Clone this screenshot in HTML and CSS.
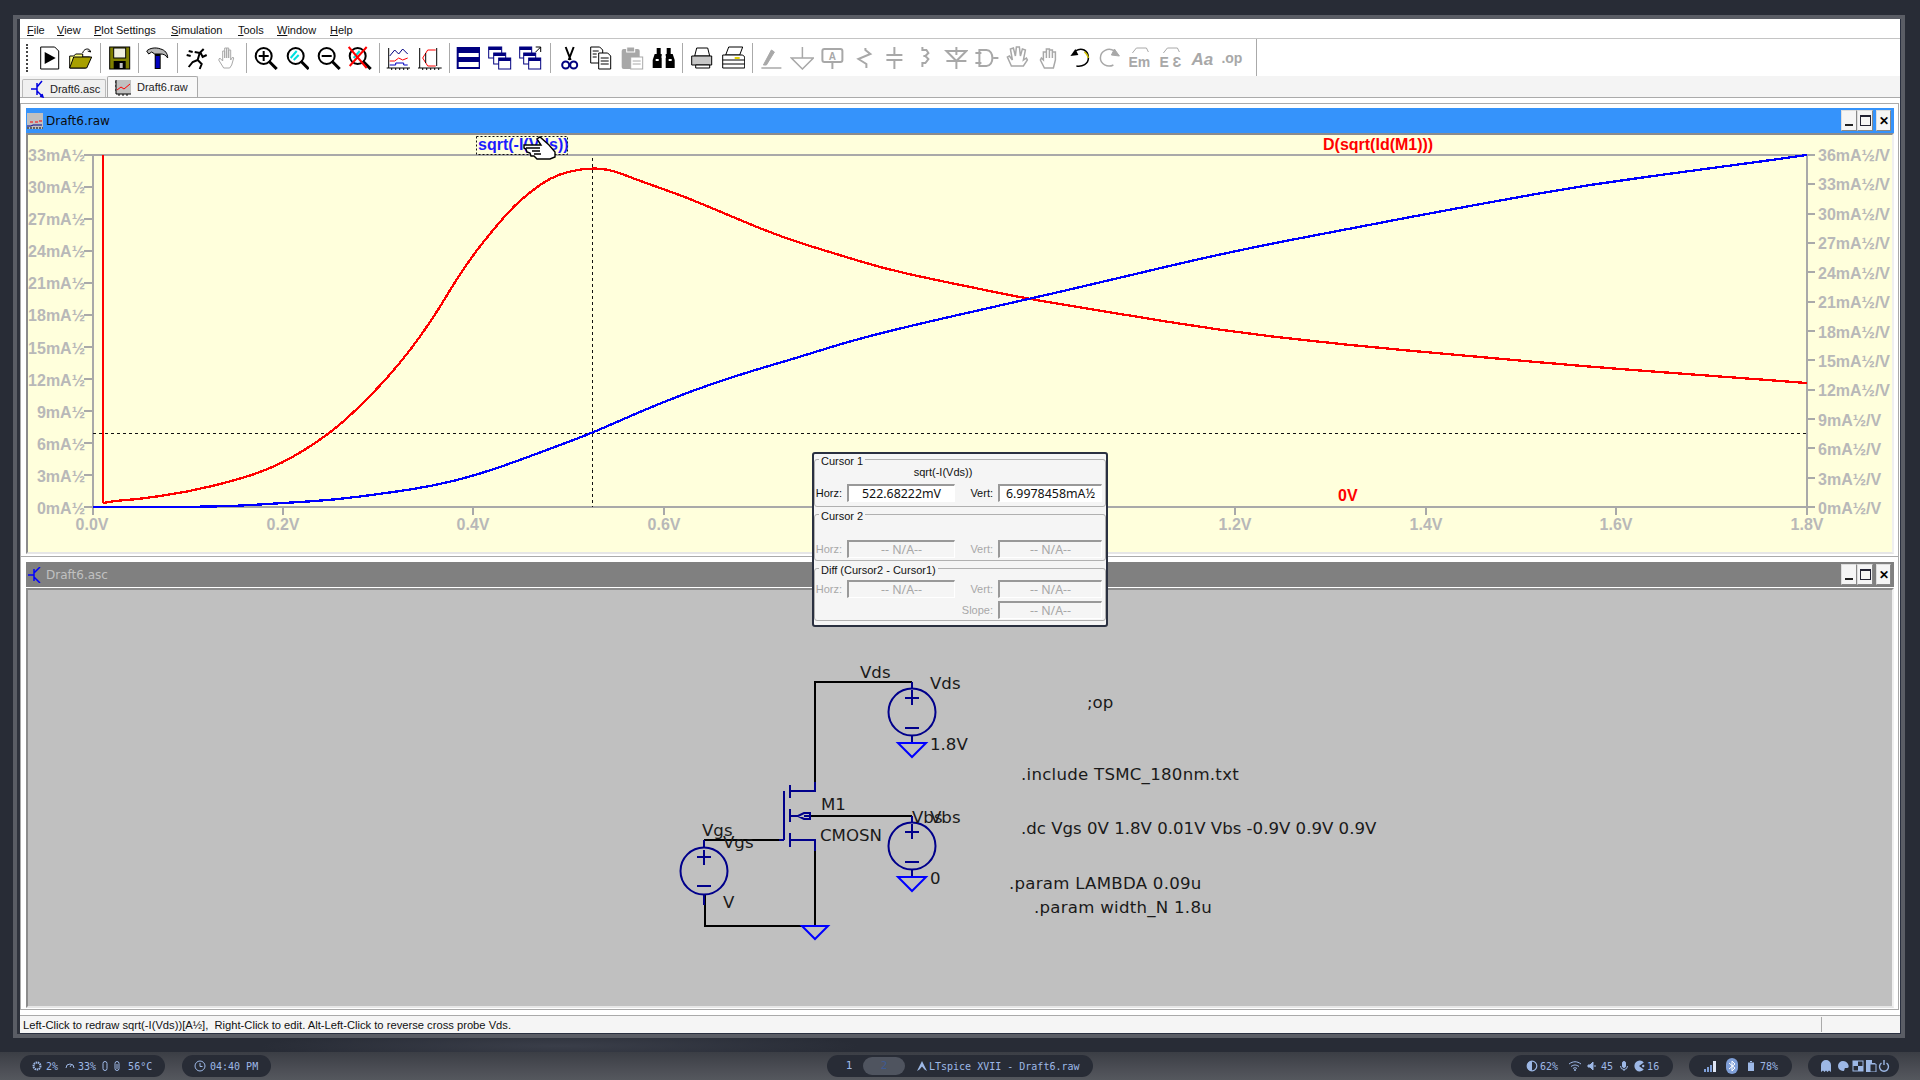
FILE: index.html
```html
<!DOCTYPE html>
<html lang="en">
  <head>
    <meta charset="UTF-8" />
    <title>LTspice XVII - Draft6.raw</title>
    <link rel="stylesheet" href="styles.css">
  </head>
  <body>
    <div class="app">
      <div class="menubar">
        <span><u>F</u>ile</span>
        <span><u>V</u>iew</span>
        <span><u>P</u>lot Settings</span>
        <span><u>S</u>imulation</span>
        <span><u>T</u>ools</span>
        <span><u>W</u>indow</span>
        <span><u>H</u>elp</span>
      </div>

      <div class="toolbar">
        <div class="grip"></div>
        <svg class="tool" viewBox="0 0 24 24"><path d="M3 1h14l4 4v18H3z" fill="#fff" stroke="#000"/><path d="M7 6l11 6-11 6z"/></svg>
        <svg class="tool" viewBox="0 0 24 24"><path d="M1 10h4l2-2h7v3h7l-4 11H1z" fill="#ffff80" stroke="#000"/><path d="M1 22l4-11h18l-5 11z" fill="#a8a000" stroke="#000"/><path d="M14 7c1-4 5-5 7-3l1 2-3-1" fill="none" stroke="#000"/></svg>
        <div class="sep"></div>
        <svg class="tool" viewBox="0 0 24 24"><rect x="2" y="1" width="20" height="22" fill="#808000" stroke="#000"/><rect x="6" y="2" width="12" height="10" fill="#f0f0e0" stroke="#000"/><rect x="6" y="15" width="12" height="8" fill="#000"/><rect x="12" y="17" width="3" height="5" fill="#c0c0c0"/></svg>
        <div class="sep"></div>
        <svg class="tool" viewBox="0 0 24 24"><path d="M1 5c3-3 9-4 14-2 4 1 7 4 7 9-2-3-4-4-7-4H9L6 6 3 8z" fill="#b8b8b8" stroke="#000"/><path d="M9 8h6v15H9z" fill="#000"/><rect x="10" y="10" width="4" height="12" fill="#0000c0"/></svg>
        <div class="sep"></div>
        <svg class="tool" viewBox="0 0 24 24"><path d="M19 3l-4 4-5-1M15 7l-2 7 4 4-2 5M13 14l-5 2-4 5M16 7l2 4 4-2M4 5l4 1M2 9l4 1" fill="none" stroke="#000" stroke-width="2"/></svg>
        <svg class="tool" viewBox="0 0 24 24"><path d="M8 22l-5-8 1-2 3 3V5h2v7V2h2v10V2h2v10V4h2v10l2-3 1 1-2 7-2 3z" fill="#fff" stroke="#a8a8a8"/></svg>
        <div class="sep"></div>
        <svg class="tool" viewBox="0 0 24 24"><circle cx="10" cy="10" r="8" fill="#fff" stroke="#000" stroke-width="2"/><path d="M15 15l8 8" stroke="#000" stroke-width="3"/><path d="M5 10h10M10 5v10" stroke="#000" stroke-width="2"/></svg>
        <svg class="tool" viewBox="0 0 24 24"><circle cx="10" cy="10" r="8" fill="#fff" stroke="#000" stroke-width="2"/><path d="M15 15l8 8" stroke="#000" stroke-width="3"/><path d="M5 12l6-7M8 14l5-5" stroke="#00e0e0" stroke-width="2"/></svg>
        <svg class="tool" viewBox="0 0 24 24"><circle cx="10" cy="10" r="8" fill="#fff" stroke="#000" stroke-width="2"/><path d="M15 15l8 8" stroke="#000" stroke-width="3"/><path d="M5 10h10" stroke="#000" stroke-width="2"/></svg>
        <svg class="tool" viewBox="0 0 24 24"><circle cx="10" cy="10" r="8" fill="#fff" stroke="#000" stroke-width="2"/><path d="M15 15l8 8" stroke="#000" stroke-width="3"/><path d="M6 12l6-7" stroke="#00e0e0" stroke-width="2"/><path d="M1 1l18 21M19 1L2 20" stroke="#f00" stroke-width="2"/></svg>
        <div class="sep"></div>
        <svg class="tool" viewBox="0 0 24 24"><path d="M2 2v20h22M0 22h2M5 22v2M9 22v2M13 22v2M17 22v2M21 22v2" fill="none" stroke="#000"/><path d="M3 10l5-6 4 4 4-5 5 5" fill="none" stroke="#000080"/><path d="M3 15h5l4-3 4 2 5-2" fill="none" stroke="#f00"/><path d="M3 19h6v-2h8v2h4" fill="none" stroke="#0000c0"/></svg>
        <svg class="tool" viewBox="0 0 24 24"><path d="M2 2v20h22M0 22h2M5 22v2M9 22v2M13 22v2M17 22v2M21 22v2" fill="none" stroke="#000"/><path d="M5 12l5-8h8M5 12l5 8h8" fill="none" stroke="#f00"/><path d="M8 7v10M19 2v18" fill="none" stroke="#000"/></svg>
        <div class="sep"></div>
        <svg class="tool" viewBox="0 0 24 24"><rect x="1" y="2" width="22" height="20" fill="#fff" stroke="#000080" stroke-width="2"/><rect x="1" y="2" width="22" height="5" fill="#000080"/><rect x="1" y="11" width="22" height="5" fill="#000080"/></svg>
        <svg class="tool" viewBox="0 0 24 24"><rect x="1" y="1" width="13" height="11" fill="#fff" stroke="#000080"/><rect x="1" y="1" width="13" height="3" fill="#000080"/><rect x="6" y="7" width="12" height="11" fill="#fff" stroke="#000080"/><rect x="6" y="7" width="12" height="3" fill="#000080"/><rect x="11" y="12" width="12" height="11" fill="#fff" stroke="#000080"/><rect x="11" y="12" width="12" height="3" fill="#000080"/></svg>
        <svg class="tool" viewBox="0 0 24 24"><rect x="1" y="1" width="12" height="11" fill="#fff" stroke="#000080"/><rect x="1" y="1" width="12" height="3" fill="#000080"/><rect x="5" y="7" width="12" height="11" fill="#fff" stroke="#000080"/><rect x="5" y="7" width="12" height="3" fill="#000080"/><rect x="10" y="12" width="12" height="11" fill="#fff" stroke="#000080"/><rect x="10" y="12" width="12" height="3" fill="#000080"/><path d="M17 1h5v5M22 1l-5 5" fill="none" stroke="#000"/></svg>
        <div class="sep"></div>
        <svg class="tool" viewBox="0 0 24 24"><path d="M8 1l5 13M16 1l-5 13" stroke="#000" stroke-width="2"/><circle cx="8" cy="19" r="3.5" fill="#fff" stroke="#000080" stroke-width="2"/><circle cx="16" cy="19" r="3.5" fill="#fff" stroke="#000080" stroke-width="2"/></svg>
        <svg class="tool" viewBox="0 0 24 24"><path d="M2 1h9l3 3v13H2z" fill="#fff" stroke="#000"/><path d="M10 7h9l3 3v13H10z" fill="#fff" stroke="#000"/><path d="M4 5h6M4 8h4M4 11h4M12 12h8M12 15h8M12 18h8" stroke="#000"/></svg>
        <svg class="tool" viewBox="0 0 24 24"><rect x="2" y="3" width="18" height="20" rx="2" fill="#a8a8a8"/><rect x="7" y="1" width="8" height="5" fill="#a8a8a8" stroke="#fff"/><rect x="11" y="11" width="12" height="12" fill="#fff" stroke="#a8a8a8"/><path d="M13 15h8M13 18h8" stroke="#a8a8a8"/></svg>
        <svg class="tool" viewBox="0 0 24 24"><path d="M3 8h7v14H1V14zM14 8h7l2 6v8h-9z"/><rect x="5" y="2" width="4" height="6"/><rect x="15" y="2" width="4" height="6"/><path d="M4 14h3M17 14h3M10 11h4" stroke="#fff" stroke-width="2"/></svg>
        <div class="sep"></div>
        <svg class="tool" viewBox="0 0 24 24"><path d="M7 2h11l2 8H5z" fill="#fff" stroke="#000"/><path d="M2 10h20v9H2z" fill="#c8c8c8" stroke="#000"/><path d="M6 19h14v3H6z" fill="#fff" stroke="#000"/></svg>
        <svg class="tool" viewBox="0 0 24 24"><path d="M7 1h14l-3 8H4z" fill="#fff" stroke="#000"/><path d="M1 9h20l2 2v11H1z" fill="#fff" stroke="#000"/><path d="M1 14h22M1 18h22" stroke="#000"/><rect x="13" y="11" width="5" height="2" fill="#e0d000"/></svg>
        <div class="sep edit"></div>
        <svg class="tool off" viewBox="0 0 24 24"><path d="M2 22h20" class="thin"/><path d="M4 19l8-15 3 2-8 13z" fill="#a8a8a8"/></svg>
        <svg class="tool off" viewBox="0 0 24 24"><path d="M12 1v11M1 12h22L12 23z" fill="none" stroke-width="1.500"/></svg>
        <svg class="tool off" viewBox="0 0 24 24"><rect x="2" y="3" width="20" height="13" rx="2" fill="none" stroke-width="2"/><text x="12" y="14" class="icon-text">A</text><path d="M12 16v7" fill="none" stroke-width="2"/></svg>
        <svg class="tool off" viewBox="0 0 24 24"><path d="M14 2v2l5 4-12 5 8 5v4" fill="none" stroke-width="2"/></svg>
        <svg class="tool off" viewBox="0 0 24 24"><path d="M12 1v8M4 9h16M4 14h16M12 14v9" fill="none" stroke-width="2"/></svg>
        <svg class="tool off" viewBox="0 0 24 24"><path d="M9 1v3h4l2 3-3 3h-2 2l3 3-3 4H9v4" fill="none" stroke-width="2"/></svg>
        <svg class="tool off" viewBox="0 0 24 24"><path d="M12 1v8M2 5h20L12 15zM2 15h20M12 15v8" fill="none" stroke-width="2"/></svg>
        <svg class="tool off" viewBox="0 0 24 24"><path d="M1 7h6M1 17h6M5 4h7c8 0 8 16 0 16H5zM19 12h5" fill="none" stroke-width="2"/></svg>
        <svg class="tool off" viewBox="0 0 24 24"><path d="M6 20L2 11l2-1 3 4-2-11 3-1 2 8 1-9h3l1 9 2-7 3 1-2 10 3-2 1 2-4 6z" fill="#fff" stroke-width="1.5"/></svg>
        <svg class="tool off" viewBox="0 0 24 24"><path d="M8 22l-4-8 1-2 2 2V6h3v6V3h3v9V4h3v8V6h3v8l-2 8z" fill="#fff" stroke-width="1.5"/></svg>
        <svg class="tool" viewBox="0 0 24 24"><path d="M8 5c6-4 13-1 13 7 0 6-6 9-12 8" fill="none" stroke="#000" stroke-width="1.5"/><path d="M17 6c2 1 3 3 4 6" fill="none" stroke="#d0c000" stroke-width="1.5"/><path d="M3 10l8-1-3-6z"/></svg>
        <svg class="tool off" viewBox="0 0 24 24"><path d="M17 5C11 1 3 5 3 12c0 6 7 10 13 7" fill="none" stroke-width="1.5"/><path d="M22 10l-8-1 3-6z" fill="#a8a8a8"/></svg>
        <svg class="tool off" viewBox="0 0 24 24"><path d="M4 7l4-5h10l2 4" fill="none"/><text x="0" y="21" class="icon-text big">Em</text></svg>
        <svg class="tool off" viewBox="0 0 24 24"><path d="M4 7l4-5h10l2 4" fill="none"/><text x="0" y="21" class="icon-text big">E &#400;</text></svg>
        <svg class="tool off" viewBox="0 0 24 24"><text x="1" y="19" class="icon-text aa">Aa</text></svg>
        <svg class="tool off" viewBox="0 0 24 24"><text x="0" y="17" class="icon-text big">.op</text></svg>
        <div class="sep end"></div>
      </div>

      <div class="tabs">
        <div class="tab">
          <svg width="14" height="18" viewBox="0 0 14 18"><path d="M1 9h6M7 3v12M12 1L7 7M7 11l6 6M10 16l3 1-1-3" fill="none" stroke="#0000e0" stroke-width="1.5"/></svg>
          Draft6.asc
        </div>
        <div class="tab active">
          <svg width="16" height="17" viewBox="0 0 16 17"><rect x="1" y="1" width="15" height="14" fill="#c0c0c0"/><path d="M1 1v14h15M1 3H0M1 7H0M1 11H0M4 15v2M8 15v2M12 15v2" fill="none" stroke="#000"/><path d="M2 11l4-3 3 2 6-5" fill="none" stroke="#f00"/></svg>
          Draft6.raw
        </div>
      </div>

      <div class="mdi">
        <div class="child plot-window">
          <div class="titlebar active">
            <svg class="title-icon" width="16" height="16" viewBox="0 0 16 16"><rect width="16" height="16" fill="#c0c0c0"/><path d="M3 9h3M8 9h3M12 8h3" stroke="#f00"/><path d="M0 13h4l2-1h9" fill="none" stroke="#00008b"/><path d="M0 15h16" stroke="#000" stroke-dasharray="2 1"/></svg>
            <span class="title-text">Draft6.raw</span>
            <div class="controls">
              <button class="ctl"><span class="min"></span></button>
              <button class="ctl"><span class="max"></span></button>
              <button class="ctl close">&#10005;</button>
            </div>
          </div>
          <div class="canvas plot-canvas">
            <svg class="plot" width="1864" height="417" viewBox="28 135 1864 417">
              <path class="axis" d="M84 155H1815M84 507H1815M93 155V515M1807 155V507"/>
              <path class="axis" d="M84 187h9M84 219h9M84 251h9M84 283h9M84 315h9M84 347h9M84 379h9M84 411h9M84 443h9M84 475h9"/>
              <path class="axis" d="M1807 184h8M1807 214h8M1807 243h8M1807 272h8M1807 302h8M1807 331h8M1807 360h8M1807 390h8M1807 419h8M1807 448h8M1807 478h8"/>
              <path class="axis" d="M283 507v8M473 507v8M664 507v8M854 507v8M1045 507v8M1235 507v8M1426 507v8M1616 507v8M1807 507v8"/>

              <g class="ylabels">
                <text x="85" y="161">33mA½</text>
                <text x="85" y="193">30mA½</text>
                <text x="85" y="225">27mA½</text>
                <text x="85" y="257">24mA½</text>
                <text x="85" y="289">21mA½</text>
                <text x="85" y="321">18mA½</text>
                <text x="85" y="354">15mA½</text>
                <text x="85" y="386">12mA½</text>
                <text x="85" y="418">9mA½</text>
                <text x="85" y="450">6mA½</text>
                <text x="85" y="482">3mA½</text>
                <text x="85" y="514">0mA½</text>
              </g>
              <g class="rlabels">
                <text x="1818" y="161">36mA½/V</text>
                <text x="1818" y="190">33mA½/V</text>
                <text x="1818" y="220">30mA½/V</text>
                <text x="1818" y="249">27mA½/V</text>
                <text x="1818" y="279">24mA½/V</text>
                <text x="1818" y="308">21mA½/V</text>
                <text x="1818" y="338">18mA½/V</text>
                <text x="1818" y="367">15mA½/V</text>
                <text x="1818" y="396">12mA½/V</text>
                <text x="1818" y="426">9mA½/V</text>
                <text x="1818" y="455">6mA½/V</text>
                <text x="1818" y="485">3mA½/V</text>
                <text x="1818" y="514">0mA½/V</text>
              </g>
              <g class="xlabels">
                <text x="92" y="530">0.0V</text>
                <text x="283" y="530">0.2V</text>
                <text x="473" y="530">0.4V</text>
                <text x="664" y="530">0.6V</text>
                <text x="1235" y="530">1.2V</text>
                <text x="1426" y="530">1.4V</text>
                <text x="1616" y="530">1.6V</text>
                <text x="1807" y="530">1.8V</text>
              </g>

              <path class="cursor" d="M592 158V507M93 433H1807"/>
              <path class="trace red" d="M103 155V503"/>
              <path class="trace red" data-points="103,503 113,501 140,499 187,492 233,481 267,470 297,455 330,433 353,413 378,388 400,363 420,337 440,307 453,285 473,255 493,230 512,208 530,192 550,178 570,171 592,168 612,170 640,181 686,197 735,218 784,238 833,253 882,268 931,279 980,289 1029,299 1102,311 1224,331 1347,345 1469,356 1592,367 1714,376 1807,383"></path>
              <path class="trace blue" data-points="93,507 187,507 237,506 283,503 333,500 387,493 433,486 477,475 520,460 560,445 592,433 637,413 686,393 735,376 796,358 857,339 931,321 1029,299 1102,282 1224,253 1347,229 1469,206 1592,184 1714,168 1807,155"></path>

              <rect class="selbox" x="476.5" y="136.5" width="91" height="18"/>
              <text class="trace-name blue-name" x="478" y="150">sqrt(-I(Vds))</text>
              <text class="trace-name red-name" x="1323" y="150">D(sqrt(Id(M1)))</text>
              <text class="trace-name red-name" x="1338" y="501">0V</text>

              <path class="hand" d="M524 145h17l-4-6 3-2 9 8 6 7v5l-5 2h-13l-3-3h-3l-1-3-3-1-1-3-2-1z"/>
              <path class="hand-line" d="M526 148h14M532 151h8M534 154h7"/>
            </svg>
          </div>
        </div>

        <div class="child schematic-window">
          <div class="titlebar">
            <svg class="title-icon" width="16" height="16" viewBox="0 0 16 16"><path d="M1 8h6M7 2v12M13 0L7 6M7 10l6 6" fill="none" stroke="#0000ff" stroke-width="1.5"/></svg>
            <span class="title-text">Draft6.asc</span>
            <div class="controls">
              <button class="ctl"><span class="min"></span></button>
              <button class="ctl"><span class="max"></span></button>
              <button class="ctl close">&#10005;</button>
            </div>
          </div>
          <div class="canvas schematic-canvas">
            <svg class="schematic" width="1864" height="416" viewBox="28 590 1864 416">
              <path class="wire" d="M912 682H815V782M815 851V926H705V895M704 840H779M810 816H912"/>
              <path class="part" d="M815 782v9H790M790 785v13M790 809v13M790 833v14M784 791v49M779 840h5M790 840h25v11M790 816h8M810 816h-6"/>
              <path class="part" d="M798 816l6-3h6v6h-6z"/>

              <circle class="part" cx="912" cy="712" r="23.5"/>
              <path class="part" d="M912 682v6M912 736v7M912 690v15M905 698h14M905 728h14"/>
              <circle class="part" cx="912" cy="846" r="23.5"/>
              <path class="part" d="M912 816v6M912 870v7M912 824v15M905 832h14M905 862h14"/>
              <circle class="part" cx="704" cy="871" r="23.5"/>
              <path class="part" d="M704 840v7M704 895v10M704 850v15M697 857h14M697 886h14"/>

              <path class="ground" d="M898 743h28l-14 14z"/>
              <path class="ground" d="M898 877h28l-14 14z"/>
              <path class="ground" d="M802 926h26l-13 13z"/>

              <g class="netlabels">
                <text x="860" y="678">Vds</text>
                <text x="930" y="689">Vds</text>
                <text x="930" y="750">1.8V</text>
                <text x="821" y="810">M1</text>
                <text x="820" y="841">CMOSN</text>
                <text x="912" y="823">Vbs</text>
                <text x="930" y="823">Vbs</text>
                <text x="702" y="836">Vgs</text>
                <text x="723" y="848">Vgs</text>
                <text x="723" y="908">V</text>
                <text x="930" y="884">0</text>
                <text x="1087" y="708">;op</text>
                <text class="wide" x="1021" y="780">.include TSMC_180nm.txt</text>
                <text x="1021" y="834">.dc Vgs 0V 1.8V 0.01V Vbs -0.9V 0.9V 0.9V</text>
                <text class="wide" x="1009" y="889">.param LAMBDA 0.09u</text>
                <text class="wide" x="1034" y="913">.param width_N 1.8u</text>
              </g>
            </svg>
          </div>
        </div>
      </div>

      <div class="statusbar">
        <span class="status-text">Left-Click to redraw sqrt(-I(Vds))[A½],&nbsp; Right-Click to edit. Alt-Left-Click to reverse cross probe Vds.</span>
        <div class="status-end"></div>
      </div>
    </div>

    <div class="cursor-dialog">
      <div class="group first">
        <div class="legend">Cursor 1</div>
        <div class="caption">sqrt(-I(Vds))</div>
        <div class="row">
          <label>Horz:</label><div class="field on">522.68222mV</div>
          <label>Vert:</label><div class="field on">6.9978458mA½</div>
        </div>
      </div>
      <div class="group second">
        <div class="legend">Cursor 2</div>
        <div class="row off">
          <label>Horz:</label><div class="field">-- N/A--</div>
          <label>Vert:</label><div class="field">-- N/A--</div>
        </div>
      </div>
      <div class="group third">
        <div class="legend">Diff (Cursor2 - Cursor1)</div>
        <div class="row off">
          <label>Horz:</label><div class="field">-- N/A--</div>
          <label>Vert:</label><div class="field">-- N/A--</div>
        </div>
        <div class="row off">
          <span></span><span></span>
          <label>Slope:</label><div class="field">-- N/A--</div>
        </div>
      </div>
    </div>

    <div class="panel">
      <div class="pill p1">
        <svg class="ic" viewBox="0 0 10 10"><circle cx="5" cy="5" r="3.5" fill="none" stroke-width="2" stroke-dasharray="1.5 0.6"/></svg><span class="ml4">2%</span>
        <svg class="ic ml7" viewBox="0 0 10 10"><path d="M1 7a4 4 0 1 1 8 0M5 6l2-3" fill="none"/></svg><span class="ml3">33%</span>
        <svg class="ic ml4" viewBox="0 0 10 10"><rect x="3" y="0.5" width="4" height="9" rx="2" fill="none"/></svg>
        <svg class="ic ml2" viewBox="0 0 10 10"><rect x="3" y="0.5" width="4" height="9" rx="2" fill="none"/><path d="M5 3v5"/></svg><span class="ml6">56°C</span>
      </div>
      <div class="pill p2">
        <svg class="ic big" viewBox="0 0 12 12"><circle cx="6" cy="6" r="5" fill="none"/><path d="M6 3v3.5h2.5" fill="none"/></svg><span class="ml4">04:40 PM</span>
      </div>
      <div class="pill p3">
        <span class="ws">1</span><span class="ws current">2</span>
        <svg class="ic arch" viewBox="0 0 10 10"><path d="M5 0L10 10 7.5 8.5 5 5.5 2.5 8.5 0 10z" stroke="none" class="fill"/></svg><span class="title-name">LTspice XVII - Draft6.raw</span>
      </div>
      <div class="pill p4">
        <svg class="ic big" viewBox="0 0 10 10"><circle cx="5" cy="5" r="4" fill="none"/><path d="M5 1a4 4 0 0 0 0 8z" class="fill" stroke="none"/></svg><span class="ml2">62%</span>
        <svg class="ic big ml11" viewBox="0 0 12 10"><path d="M0 3c4-3 8-3 12 0M2 5.500c3-2 5-2 8 0M4 7.500c1.500-1 2.500-1 4 0" fill="none"/><circle cx="6" cy="9" r="1" class="fill" stroke="none"/></svg>
        <svg class="ic ml6" viewBox="0 0 10 10"><path d="M1 4h2l3-3v8L3 6H1zM8 4v2" class="fill"/></svg><span class="ml4">45</span>
        <svg class="ic ml6" viewBox="0 0 10 10"><rect x="3.500" y="0.500" width="3" height="6" rx="1.500" class="fill"/><path d="M1.500 5a3.500 3.500 0 0 0 7 0M5 8.500v1.500" fill="none"/></svg>
        <svg class="ic big ml4" viewBox="0 0 10 10"><path d="M9 2a4.500 4.500 0 1 0 0 6L5 5z" class="fill" stroke="none"/><circle cx="8.500" cy="5" r="1" class="fill" stroke="none"/></svg><span class="ml2">16</span>
      </div>
      <div class="pill p5">
        <svg class="bars" width="13" height="11" viewBox="0 0 13 11"><path d="M0 8h2v3H0zM3 6h2v5H3zM6 4h2v7H6z" fill="#7f9fd8"/><path d="M9 0h3v11H9z" fill="#dfe6f5"/></svg>
        <div class="bt"><svg width="8" height="12" viewBox="0 0 8 12"><path d="M1 3l6 5-3 3V1l3 3-6 5" fill="none" stroke="#fff"/></svg></div>
        <svg class="ic ml8" viewBox="0 0 10 10"><rect x="2" y="1.500" width="6" height="8.500" class="fill" stroke="none"/><rect x="4" y="0" width="2" height="1" class="fill" stroke="none"/></svg><span class="ml4">78%</span>
      </div>
      <div class="pill p6">
        <svg class="ic big" viewBox="0 0 12 12"><path d="M1 12V5a5 5 0 0 1 10 0v7l-2-1.500-1.500 1.500-1.500-1.500L4.500 12 3 10.500z" class="fill" stroke="none"/></svg>
        <svg class="ic big ml5" viewBox="0 0 12 12"><path d="M6 1a5 5 0 0 0 0 10c2 0 1-2 2-3h2c2 0 2-2 1-4-1-2-3-3-5-3z" class="fill" stroke="none"/></svg>
        <svg class="ic big ml3" viewBox="0 0 12 12"><rect x="1" y="1" width="10" height="10" fill="none"/><path d="M1 1h5v5H1zM6 6h5v5H6z" class="fill" stroke="none"/></svg>
        <svg class="ic big ml1" viewBox="0 0 12 12"><path d="M1 0h6v3h3v9H1z" class="fill" stroke="none"/><path d="M5 4h6v8H5z" fill="#282c36"/></svg>
        <svg class="ic big ml1" viewBox="0 0 12 12"><path d="M3.500 3a4.500 4.500 0 1 0 5 0M6 0v5" fill="none" stroke-width="1.400"/></svg>
      </div>
    </div>

    <script>
      // smooth the sampled traces: each sample is a control point, midpoints are on the curve
      document.querySelectorAll("[data-points]").forEach(function (trace) {
        const pts = trace.dataset.points.split(" ").map((p) => p.split(",").map(Number));
        let d = `M${pts[0][0]} ${pts[0][1]}`;
        for (let i = 1; i < pts.length - 1; i++) {
          const mx = (pts[i][0] + pts[i + 1][0]) / 2;
          const my = (pts[i][1] + pts[i + 1][1]) / 2;
          d += `Q${pts[i][0]} ${pts[i][1]} ${mx} ${my}`;
        }
        const last = pts[pts.length - 1];
        d += `L${last[0]} ${last[1]}`;
        trace.setAttribute("d", d);
      });
    </script>
  </body>
</html>
```

FILE: styles.css
```css
body {
  margin: 0;
  width: 1920px;
  height: 1080px;
  overflow: hidden;
  position: relative;
  background: radial-gradient(ellipse 300px 16px at 560px 1046px, #3a3e49, transparent), #282c36;
  font-family: "Liberation Sans", Arial, sans-serif;
}

/* main LTspice window */
.app {
  position: absolute;
  left: 20px;
  top: 19px;
  width: 1880px;
  height: 1014px;
  display: flex;
  flex-direction: column;
  background-color: #fff;
  border-bottom: 1px solid #2a3040;
  border-right: 1px solid #2a3040;
  box-shadow: -3px 0 0 #2f333d, -3px 0 0 4px #5a5d65, 0 0 0 4px #5a5d65;
}
.menubar {
  height: 20px;
  box-sizing: border-box;
  padding: 3px 0 0 7px;
  display: flex;
  align-items: center;
  font-size: 11px;
  color: #111;
  border-bottom: 1px solid #c4c4c4;
  flex: none;
}
.menubar span:nth-child(1) { width: 30px; }
.menubar span:nth-child(2) { width: 37px; }
.menubar span:nth-child(3) { width: 77px; }
.menubar span:nth-child(4) { width: 67px; }
.menubar span:nth-child(5) { width: 39px; }
.menubar span:nth-child(6) { width: 53px; }

.toolbar {
  height: 37px;
  display: flex;
  align-items: center;
  padding-left: 6px;
  flex: none;
}
.grip {
  width: 2px;
  height: 28px;
  border-left: 2px dotted #444;
  margin-right: 4px;
}
.tool {
  width: 24px;
  height: 24px;
  padding: 0 3.7px;
  flex: none;
}
.edit ~ .tool {
  padding: 0 3.4px;
}
.off {
  stroke: #a8a8a8;
}
.thin {
  stroke-width: 1.5;
}
.icon-text {
  font-size: 10px;
  font-weight: bold;
  fill: #a8a8a8;
  stroke: none;
  text-anchor: middle;
}
.icon-text.big {
  font-size: 14px;
  text-anchor: start;
}
.icon-text.aa {
  font-size: 17px;
  font-style: italic;
  text-anchor: start;
}
.sep {
  width: 1px;
  height: 30px;
  margin: 0 3px;
  background-color: #aaa;
  flex: none;
}
.sep.end {
  height: 37px;
  margin-left: 8px;
}

.tabs {
  height: 21px;
  display: flex;
  align-items: flex-end;
  padding-left: 2px;
  background-color: #f4f4f4;
  border-bottom: 1px solid #aaa;
  flex: none;
}
.tab {
  height: 18px;
  width: 84px;
  display: flex;
  align-items: center;
  gap: 6px;
  padding-left: 7px;
  box-sizing: border-box;
  font-size: 11px;
  color: #222;
  border: 1px solid #bbb;
  border-bottom: none;
  border-radius: 2px 2px 0 0;
  background-color: #f0f0f0;
}
.tab.active {
  height: 21px;
  width: 91px;
  margin-left: 1px;
  background-color: #f8f8f8;
  border-color: #aaa;
}

/* the two child windows */
.mdi {
  flex: 1;
  padding-top: 5px;
  display: flex;
  flex-direction: column;
}
.child {
  margin: 0 1px 0 0;
  border: 1px solid #aaa;
  padding: 4px 4px 0 5px;
  background-color: #fff;
}
.plot-window {
  height: 454px;
  box-sizing: border-box;
}
.schematic-window {
  border-top: none;
  padding-top: 5px;
  height: 453px;
  box-sizing: border-box;
}
.titlebar {
  height: 25px;
  display: flex;
  align-items: center;
  background-color: #808080;
  color: #c0c0c0;
  font-family: "DejaVu Sans", sans-serif;
  font-size: 12px;
}
.titlebar.active {
  background-color: #3593fb;
  color: #0c0c0c;
}
.title-icon {
  margin: 0 3px 0 1px;
  flex: none;
}
.title-text {
  flex: 1;
}
.controls {
  display: flex;
  margin-right: 3px;
}
.ctl {
  width: 16px;
  height: 21px;
  padding: 0;
  border: 1px solid #ddd;
  border-right-color: #888;
  border-bottom-color: #888;
  background-color: #f5f5f5;
  display: flex;
  align-items: center;
  justify-content: center;
}
.ctl.close {
  margin-left: 3px;
  width: 15px;
  font-size: 12px;
  font-weight: bold;
  color: #000;
}
.min {
  width: 8px;
  height: 2px;
  background-color: #222;
  margin-top: 9px;
}
.max {
  width: 9px;
  height: 8px;
  border: 1px solid #223;
  border-top-width: 2px;
}
.canvas {
  border: 2px solid #8c8c8c;
  border-right-color: #f0f0f0;
  border-bottom-color: #e6e6e6;
}
.plot-canvas {
  background-color: #ffffdc;
}
.schematic-canvas {
  margin-top: 1px;
  background-color: #c0c0c0;
}
svg {
  display: block;
}

/* plot */
.axis {
  fill: none;
  stroke: #a9a9a9;
  stroke-width: 2;
  shape-rendering: crispEdges;
}
.plot text {
  font-family: "Liberation Sans", Arial, sans-serif;
  font-size: 16px;
  font-weight: bold;
}
.ylabels text {
  fill: #b8b8b8;
  text-anchor: end;
}
.rlabels text {
  fill: #b8b8b8;
}
.xlabels text {
  fill: #b8b8b8;
  text-anchor: middle;
}
.cursor {
  fill: none;
  stroke: #111;
  stroke-width: 1;
  stroke-dasharray: 3 3;
  shape-rendering: crispEdges;
}
.trace {
  fill: none;
  stroke-width: 2.3;
  shape-rendering: crispEdges;
}
.red {
  stroke: #ff0000;
}
.blue {
  stroke: #0000ff;
}
.selbox {
  fill: none;
  stroke: #111;
  stroke-dasharray: 2 2;
}
.blue-name {
  fill: #1c1cff;
}
.red-name {
  fill: #ff0000;
}
.hand {
  fill: #fff;
  stroke: #000;
  stroke-width: 1.4;
}
.hand-line {
  fill: none;
  stroke: #000;
  stroke-width: 1.4;
}

/* schematic */
.wire {
  fill: none;
  stroke: #000;
  stroke-width: 2;
}
.part {
  fill: none;
  stroke: #00008b;
  stroke-width: 2;
}
.ground {
  fill: none;
  stroke: #0000ff;
  stroke-width: 2;
}
.netlabels text {
  font-family: "DejaVu Sans", sans-serif;
  font-size: 16.6px;
  fill: #1a1a1a;
}
.netlabels .wide {
  letter-spacing: 0.26px;
}

.statusbar {
  height: 17px;
  display: flex;
  align-items: center;
  padding-left: 3px;
  font-size: 11.2px;
  color: #111;
  background-color: #f5f5f5;
  border-top: 1px solid #aaa;
  flex: none;
}
.status-text {
  flex: 1;
}
.status-end {
  width: 78px;
  height: 15px;
  border-left: 1px solid #aaa;
}

/* cursor readout */
.cursor-dialog {
  position: absolute;
  left: 812px;
  top: 452px;
  width: 296px;
  height: 175px;
  box-sizing: border-box;
  padding-top: 5px;
  background-color: #f5f5f5;
  border: 2px solid #2a3040;
  border-radius: 3px;
  font-size: 11px;
  color: #111;
}
.group {
  position: relative;
  box-sizing: border-box;
  border: 1px solid #b0b0b0;
  border-radius: 3px;
  margin-bottom: 7px;
}
.group.first { height: 48px; padding-top: 5px; }
.group.second { height: 47px; padding-top: 25px; }
.group.third { height: 53px; padding-top: 11px; margin-bottom: 0; }
.legend {
  position: absolute;
  left: 4px;
  top: -5px;
  padding: 0 2px;
  background-color: #f5f5f5;
}
.caption {
  height: 14px;
  line-height: 14px;
  margin-bottom: 5px;
  padding-left: 83px;
  width: 90px;
  text-align: center;
}
.row {
  display: grid;
  grid-template-columns: 27px 113px 38px 109px;
  align-items: center;
  margin-bottom: 3px;
}
.row label {
  text-align: right;
}
.field {
  height: 18px;
  margin-left: 5px;
  box-sizing: border-box;
  text-align: center;
  line-height: 16px;
  font-family: "Noto Sans", sans-serif;
  font-size: 12.4px;
  border-top: 2px solid #999;
  border-left: 2px solid #999;
  border-right: 1px solid #fff;
  border-bottom: 1px solid #fff;
}
.field.on {
  background-color: #fff;
  color: #111;
}
.row.off {
  color: #a8a8a8;
}

/* desktop panel */
.panel {
  position: absolute;
  left: 0;
  right: 0;
  bottom: 0;
  height: 28px;
  display: flex;
  align-items: center;
  background: linear-gradient(#3b3e45, #4e5057 70%, #55585e);
  font-family: "DejaVu Sans Mono", monospace;
  font-size: 10px;
  color: #9db8e6;
  white-space: nowrap;
}
.pill {
  height: 22px;
  display: flex;
  align-items: center;
  border-radius: 11px;
  background-color: #282c36;
  flex: none;
  box-sizing: border-box;
}
.p1 { margin-left: 20px; width: 145px; padding-left: 12px; }
.p2 { margin-left: 17px; width: 89px; padding-left: 12px; }
.p3 { margin-left: 556px; width: 266px; padding-left: 8px; }
.p4 { margin-left: 418px; width: 162px; padding-left: 15px; }
.p5 { margin-left: 16px; width: 103px; padding-left: 15px; }
.p6 { margin-left: 16px; width: 91px; padding-left: 12px; }
.ic {
  width: 10px;
  height: 10px;
  stroke: #9db8e6;
  fill: none;
  flex: none;
}
.ic.big {
  width: 12px;
  height: 12px;
}
.fill {
  fill: #9db8e6;
}
.ml1 { margin-left: 1px; }
.ml2 { margin-left: 2px; }
.ml3 { margin-left: 3px; }
.ml4 { margin-left: 4px; }
.ml5 { margin-left: 5px; }
.ml6 { margin-left: 6px; }
.ml7 { margin-left: 7px; }
.ml8 { margin-left: 8px; }
.ml11 { margin-left: 11px; }
.ws {
  width: 28px;
  height: 18px;
  line-height: 18px;
  text-align: center;
  font-size: 11px;
}
.ws.current {
  width: 42px;
  border-radius: 9px;
  background-color: #4f545f;
  color: #3e5a92;
}
.arch {
  margin-left: 12px;
}
.title-name {
  margin-left: 2px;
}
.bars {
  flex: none;
}
.bt {
  width: 12px;
  height: 16px;
  margin-left: 9px;
  display: flex;
  align-items: center;
  justify-content: center;
  border-radius: 6px;
  background-color: #7f9fd8;
}
```
